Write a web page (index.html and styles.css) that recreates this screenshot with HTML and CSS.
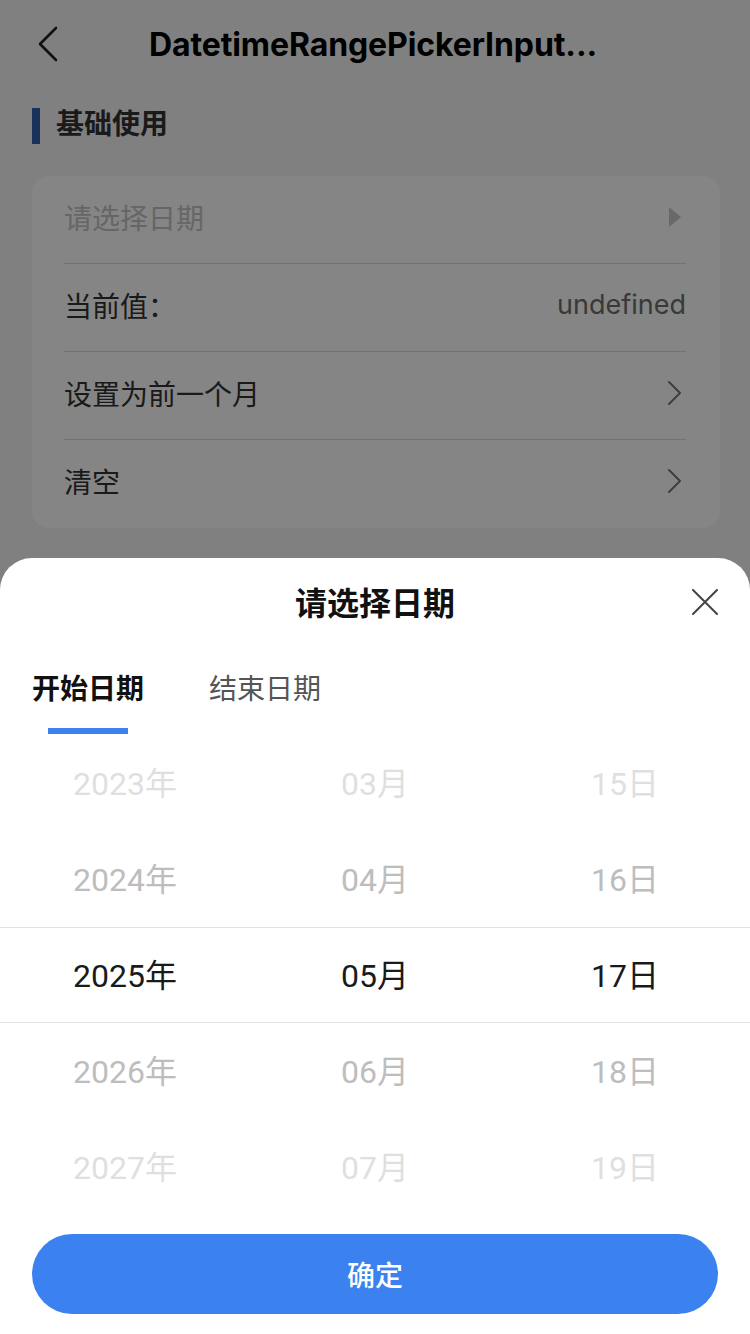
FILE: index.html
```html
<!DOCTYPE html>
<html lang="zh-CN">
<head>
    <meta charset="UTF-8">
    <meta name="viewport" content="width=device-width, initial-scale=1.0">
    <title>DatetimeRangePickerInput</title>
    <link rel="stylesheet" href="styles.css">
</head>
<body>
    <div class="page">
        <header class="nav">
            <svg class="nav-back" width="24" height="36" viewBox="0 0 24 36">
                <polyline points="20,2 4,18 20,34" fill="none" stroke="#222" stroke-width="2.6" stroke-linecap="round" stroke-linejoin="round"/>
            </svg>
            <div class="nav-title">DatetimeRangePickerInput...</div>
        </header>

        <div class="section-title">基础使用</div>

        <div class="card">
            <div class="cell">
                <span class="cell-label placeholder">请选择日期</span>
                <svg width="14" height="22" viewBox="0 0 14 22">
                    <polygon points="1,1 13,11 1,21" fill="#c9c9c9"/>
                </svg>
            </div>
            <div class="cell">
                <span class="cell-label">当前值：</span>
                <span class="cell-value">undefined</span>
            </div>
            <div class="cell">
                <span class="cell-label">设置为前一个月</span>
                <svg width="16" height="26" viewBox="0 0 16 26">
                    <polyline points="3,2 14,13 3,24" fill="none" stroke="#777" stroke-width="2" stroke-linecap="round" stroke-linejoin="round"/>
                </svg>
            </div>
            <div class="cell">
                <span class="cell-label">清空</span>
                <svg width="16" height="26" viewBox="0 0 16 26">
                    <polyline points="3,2 14,13 3,24" fill="none" stroke="#777" stroke-width="2" stroke-linecap="round" stroke-linejoin="round"/>
                </svg>
            </div>
        </div>
    </div>

    <div class="mask"></div>

    <div class="popup">
        <div class="popup-header">
            <span class="popup-title">请选择日期</span>
            <svg class="popup-close" width="26" height="26" viewBox="0 0 26 26">
                <path d="M1 1 L25 25 M25 1 L1 25" stroke="#444" stroke-width="2" stroke-linecap="round"/>
            </svg>
        </div>

        <div class="tabs">
            <div class="tab active">
                <span>开始日期</span>
                <div class="tab-line"></div>
            </div>
            <div class="tab">
                <span>结束日期</span>
            </div>
        </div>

        <div class="picker">
            <div class="picker-col">
                <div class="picker-item far">2023年</div>
                <div class="picker-item near">2024年</div>
                <div class="picker-item current">2025年</div>
                <div class="picker-item near">2026年</div>
                <div class="picker-item far">2027年</div>
            </div>
            <div class="picker-col">
                <div class="picker-item far">03月</div>
                <div class="picker-item near">04月</div>
                <div class="picker-item current">05月</div>
                <div class="picker-item near">06月</div>
                <div class="picker-item far">07月</div>
            </div>
            <div class="picker-col">
                <div class="picker-item far">15日</div>
                <div class="picker-item near">16日</div>
                <div class="picker-item current">17日</div>
                <div class="picker-item near">18日</div>
                <div class="picker-item far">19日</div>
            </div>
            <div class="picker-band"></div>
        </div>

        <div class="popup-footer">
            <button class="confirm-btn">确定</button>
        </div>
    </div>
</body>
</html>
```

FILE: styles.css
```css
* {
    box-sizing: border-box;
}
body {
    margin: 0;
    width: 750px;
    height: 1334px;
    overflow: hidden;
    position: relative;
    background: #f5f5f5;
    font-family: Roboto, "Noto Sans CJK SC", sans-serif;
    color: #333;
}
.nav {
    height: 88px;
    display: flex;
    align-items: center;
    justify-content: center;
    position: relative;
}
.nav-back {
    position: absolute;
    left: 36px;
    top: 26px;
}
.nav-title {
    font-family: Inter, "Noto Sans CJK SC", sans-serif;
    font-size: 32px;
    font-weight: 700;
    letter-spacing: -0.1px;
    color: #000;
    margin-left: -4px;
}
.section-title {
    margin: 20px 32px 32px;
    height: 36px;
    line-height: 34px;
    padding-left: 16px;
    border-left: 8px solid #2f5fb3;
    font-size: 28px;
    font-weight: 700;
    color: #333;
}
.card {
    margin: 0 30px 0 32px;
    background: #fff;
    border-radius: 16px;
    padding: 0 34px 0 32px;
}
.cell {
    height: 88px;
    padding-bottom: 6px;
    display: flex;
    align-items: center;
    justify-content: space-between;
    border-bottom: 1px solid #dcdcdc;
    font-size: 28px;
}
.cell:last-child {
    border-bottom: none;
}
.cell-label {
    color: #333;
}
.cell-label.placeholder {
    color: #c4c4c4;
}
.cell-value {
    font-family: Inter, sans-serif;
    color: #6e6e6e;
    font-size: 27px;
}
.cell svg {
    margin-right: 4px;
}
.mask {
    position: absolute;
    inset: 0;
    background: rgba(0, 0, 0, 0.48);
}
.popup {
    position: absolute;
    left: 0;
    right: 0;
    bottom: 0;
    height: 776px;
    background: #fff;
    border-radius: 32px 32px 0 0;
    display: flex;
    flex-direction: column;
}
.popup-header {
    height: 90px;
    padding-bottom: 4px;
    display: flex;
    align-items: center;
    justify-content: center;
    position: relative;
}
.popup-title {
    font-size: 32px;
    font-weight: 700;
    color: #111;
}
.popup-close {
    position: absolute;
    right: 32px;
    top: 31px;
}
.tabs {
    display: flex;
    padding: 22px 32px 0;
    gap: 65px;
}
.tab {
    display: flex;
    flex-direction: column;
    align-items: center;
    font-size: 28px;
    line-height: 40px;
    color: #555;
}
.tab.active {
    color: #111;
    font-weight: 700;
}
.tab-line {
    width: 80px;
    height: 6px;
    margin-top: 18px;
    background: #3b82f0;
}
.picker {
    display: flex;
    position: relative;
    height: 480px;
    margin-top: 1px;
}
.picker-col {
    flex: 1;
    display: flex;
    flex-direction: column;
}
.picker-item {
    height: 96px;
    padding-bottom: 4px;
    display: flex;
    align-items: center;
    justify-content: center;
    font-size: 32px;
    color: #1a1a1a;
}
.picker-item.near {
    color: #bdbdbd;
}
.picker-item.far {
    color: #dfdfdf;
}
.picker-band {
    position: absolute;
    left: 0;
    right: 0;
    top: 192px;
    height: 96px;
    border-top: 1px solid #e2e2e2;
    border-bottom: 1px solid #e2e2e2;
    pointer-events: none;
}
.popup-footer {
    padding: 19px 32px 20px;
}
.confirm-btn {
    width: 100%;
    height: 80px;
    border: none;
    border-radius: 40px;
    background: #3b82f0;
    color: #fff;
    font-family: Roboto, "Noto Sans CJK SC", sans-serif;
    font-size: 28px;
    font-weight: 500;
}
```
